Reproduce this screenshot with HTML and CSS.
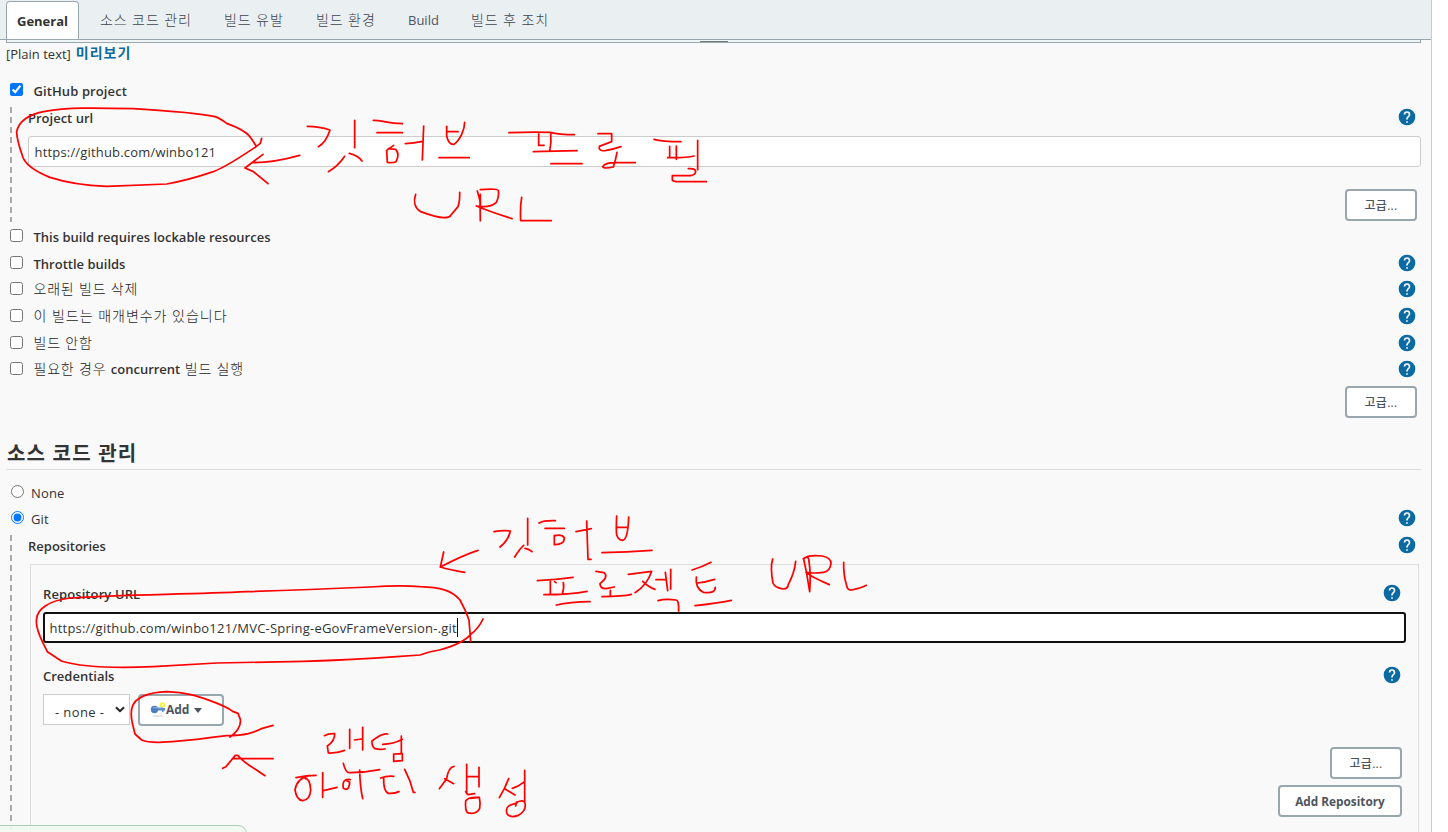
FILE: index.html
```html
<!DOCTYPE html>
<html lang="ko">
<head>
<meta charset="utf-8">
<title>General</title>
<link rel="stylesheet" href="styles.css">
</head>
<body>
<svg width="0" height="0" class="defs">
  <symbol id="help" viewBox="0 0 24 24">
    <path fill="#0b6aa2" d="M12 2a10 10 0 1 0 0 20a10 10 0 0 0 0-20zm1 17h-2v-2h2zm2.07-7.75l-.9.92C13.45 12.9 13 13.5 13 15h-2v-.5c0-1.1.45-2.1 1.17-2.83l1.24-1.26c.37-.36.59-.86.59-1.41a2 2 0 1 0-4 0H8a4 4 0 1 1 8 0c0 .88-.36 1.68-.93 2.25z"/>
  </symbol>
</svg>
<main class="page">
  <nav class="tabs">
    <a class="tab active">General</a>
    <a class="tab t-scm">소스 코드 관리</a>
    <a class="tab t-trigger">빌드 유발</a>
    <a class="tab t-env">빌드 환경</a>
    <a class="tab t-build">Build</a>
    <a class="tab t-post">빌드 후 조치</a>
  </nav>
  <div class="textarea-end"><span class="grip"></span></div>
  <div class="preview"><span class="plain">[Plain text]</span><a class="preview-link">미리보기</a></div>

  <div class="row github"><input type="checkbox" checked><span class="semi gh">GitHub project</span></div>
  <section class="nested project">
    <div class="field-head"><span class="semi">Project url</span><svg class="help"><use href="#help"/></svg></div>
    <div class="input"><span class="u1">https://github.com/winbo121</span></div>
    <div class="actions"><button class="btn adv">고급...</button></div>
  </section>

  <div class="row r1"><input type="checkbox"><span class="semi lock">This build requires lockable resources</span></div>
  <div class="row r2"><input type="checkbox"><span class="semi throttle">Throttle builds</span><svg class="help"><use href="#help"/></svg></div>
  <div class="row r3"><input type="checkbox"><span class="ko">오래된 빌드 삭제</span><svg class="help"><use href="#help"/></svg></div>
  <div class="row r4"><input type="checkbox"><span class="ko">이 빌드는 매개변수가 있습니다</span><svg class="help"><use href="#help"/></svg></div>
  <div class="row r5"><input type="checkbox"><span class="ko">빌드 안함</span><svg class="help"><use href="#help"/></svg></div>
  <div class="row r6"><input type="checkbox"><span class="ko">필요한 경우 <b>concurrent</b> 빌드 실행</span><svg class="help"><use href="#help"/></svg></div>
  <div class="actions general-actions"><button class="btn adv">고급...</button></div>

  <h2>소스 코드 관리</h2>
  <div class="row radio none"><input type="radio" name="scm"><span>None</span></div>
  <div class="row radio git"><input type="radio" name="scm" checked><span>Git</span><svg class="help"><use href="#help"/></svg></div>
  <section class="nested repos">
    <div class="field-head"><span class="semi">Repositories</span><svg class="help"><use href="#help"/></svg></div>
    <div class="card">
      <div class="field-head"><span class="semi repo-label">Repository URL</span><svg class="help"><use href="#help"/></svg></div>
      <div class="input focused"><span class="u2">https://github.com/winbo121/MVC-Spring-eGovFrameVersion-.git</span><i class="caret"></i></div>
      <div class="field-head cred"><span class="semi">Credentials</span><svg class="help"><use href="#help"/></svg></div>
      <div class="cred-row">
        <div class="select"><span>- none -</span><svg width="10" height="7" viewBox="0 0 10 7"><path d="M1 1.2L5 5.2L9 1.2" fill="none" stroke="#222" stroke-width="2"/></svg></div>
        <button class="btn add">
          <svg width="16" height="16" viewBox="0 0 16 16"><ellipse cx="8" cy="14" rx="6" ry="1" fill="#e3e3e3"/><circle cx="12.5" cy="3" r="2" fill="#fffbc0" stroke="#f7ef3a" stroke-width="1.5"/><path d="M6 6H15V8.5H13.5V10H12V8.5H6z" fill="#5b8bc5"/><circle cx="4.5" cy="7.5" r="3.7" fill="#4c7fbd"/><path d="M3 5.8H13" stroke="#8fb3dc"/></svg><span>Add</span><i class="arrow"></i>
        </button>
      </div>
      <div class="card-actions"><button class="btn adv">고급...</button><button class="btn repo-btn">Add Repository</button></div>
    </div>
  </section>
</main>
<div class="status"></div>

<!-- freehand red pen strokes over the form -->
<svg class="ink" viewBox="0 0 1448 832">
  <g transform="scale(.33333)">
    <path d="M785 415L781 430L768 440C730 465 680 500 640 515C590 532 540 545 500 552L320 559C240 556 190 545 150 532C100 512 80 495 70 475C58 440 50 420 50 395C55 370 75 345 135 334C200 322 280 323 400 326C500 332 600 340 645 350Q660 355 680 370Q735 390 750 410L768 437"/>
    <path d="M789 463L735 504L760 515L804 551M759 488Q820 488 899 466"/>
  </g>
  <g transform="translate(240 100) scale(.33333)">
    <path d="M202 79Q238 79 270 90Q258 128 235 140M344 61V143M314 169C300 190 280 207 265 215M328 160Q356 167 366 183"/>
    <path d="M400 61C430 61 440 71 487 71M411 98H487M461 136L440 151L442 187Q458 190 468 185Q480 162 467 148L445 146M496 131Q520 130 548 124M551 78L547 180"/>
    <path d="M620 79V108Q626 135 642 133C660 120 674 90 674 67M621 95H654M597 173H688"/>
    <path d="M527 283C520 303 523 324 542 335Q590 353 612 353Q629 353 633 345L654 320Q660 303 659 277"/>
  </g>
  <g transform="translate(360 0) scale(.33333)">
    <path d="M352 573L360 602L361 662M361 583V622M361 569Q415 565 415 572Q418 590 409 607Q390 625 349 618Q390 635 456 656M485 592Q480 620 482 662H574"/>
  </g>
  <g transform="translate(490 110) scale(.33333)">
    <path d="M57 68Q110 66 180 67Q208 74 253 74M146 68V106H162M182 68Q185 95 179 124M130 125L261 122M183 161H276"/>
    <path d="M324 71H365V95L328 109Q325 124 345 122Q370 118 393 110M381 127Q377 150 370 171Q340 177 338 170Q345 158 374 158H436"/>
    <path d="M492 88Q515 95 573 95M539 109V139M559 108V148M533 143Q590 144 612 138M623 91V179M595 176Q617 174 617 185Q615 195 602 197H547V210Q550 215 566 215H649"/>
  </g>
  <g transform="translate(420 500) scale(.33333)">
    <path d="M152 424L147 360L136 332L120 300C95 270 60 262 0 260Q-60 255 -150 261Q-350 270 -520 275C-700 284 -890 283 -1050 294C-1115 302 -1147 327 -1150 355Q-1155 380 -1132 427L-1118 455L-1076 483C-1020 500 -930 506 -800 500L-610 489L-350 484Q-200 480 -70 470L0 465L28 456L58 450Q130 430 152 403Q175 387 189 357"/>
    <path d="M71 156L61 201Q90 210 134 217M61 201Q130 165 174 151"/>
    <path d="M222 95Q250 90 271 93Q265 122 240 141M323 55V135M311 136Q300 145 284 171M315 145Q325 146 336 155"/>
    <path d="M357 69Q370 61 406 62M375 85H433M403 106V134Q433 135 433 113Q425 102 405 107M468 95L514 86M500 63L504 178H513M590 48Q588 90 590 105Q595 120 608 121Q624 118 626 51M591 82H624M546 158Q620 157 696 151"/>
    <path d="M352 242Q410 239 459 232M391 242V280M404 245L408 248M430 248Q433 262 427 281M372 284Q450 284 501 274M409 315Q450 306 510 305"/>
    <path d="M528 214L552 218Q567 230 540 251Q540 266 558 266L583 261M571 271V290M546 290Q610 289 634 283M625 223L695 214Q680 258 645 278M668 244Q687 262 705 268"/>
  </g>
  <g transform="translate(640 540) scale(.33333)">
    <path d="M48 119H75M76 97L83 152M92 88V147M54 182Q75 176 108 180Q117 180 116 213M156 90Q185 82 213 67M169 111Q165 145 190 157Q226 162 226 142M172 129Q198 126 224 118M165 197Q230 190 274 181"/>
    <path d="M398 57Q390 83 399 129Q404 143 430 147Q444 146 445 133Q463 100 467 64M490 57Q507 44 507 65Q513 100 509 155M491 57L500 100L509 155M490 56Q505 43 547 48Q573 53 573 70Q570 95 550 97Q520 101 498 97Q515 111 568 134M611 67Q610 105 620 137Q622 151 635 150Q665 144 679 136"/>
  </g>
  <g transform="translate(0 660) scale(.33333)">
    <path d="M690 231Q725 205 721 178L714 160L698 154Q680 140 630 122C590 107 560 98 500 95C440 97 407 115 398 137Q390 155 397 190L405 222L425 240Q440 247 475 247Q560 243 635 232L680 227Q720 227 745 221Q775 212 787 205L819 196"/>
    <path d="M668 325L678 320L706 286L713 286Q735 310 765 327L795 347M700 296H819"/>
  </g>
  <g transform="translate(280 710) scale(.33333)">
    <path d="M133 77Q145 70 164 71Q165 92 142 108L145 129Q170 130 194 121M209 58V115M223 90L245 87M248 52V120M323 72Q307 68 276 93Q275 110 285 116Q300 120 315 117M308 103Q340 103 367 88M364 78V128M341 132V154L367 152V131Z"/>
    <path d="M190 160Q197 190 210 188Q255 188 299 179M48 203Q80 196 108 196M88 197Q50 205 45 240Q50 270 68 272Q90 270 92 240Q90 205 75 205M128 188V262M130 242L171 232M211 209Q185 204 190 235Q207 246 209 217L197 210M239 180Q240 230 248 266M302 204Q320 197 341 199M311 202Q310 245 325 250Q340 252 357 245M374 178L389 211L400 247H405"/>
    <path d="M522 169Q505 172 500 206L478 236M494 206L521 221M560 163V251M597 172V230M560 200H597M557 245L564 254L584 251M595 262Q565 260 557 273Q555 300 562 308Q590 315 599 295Q602 280 598 262L570 265"/>
    <path d="M686 206L673 236L658 263M675 237L705 255M697 235Q715 230 734 215M734 181V277M707 288L709 277Q730 268 734 277Q742 300 715 316Q690 325 681 311Q672 285 710 280"/>
  </g>
</svg>
</body>
</html>
```
FILE: styles.css
```css
* { box-sizing: border-box; }
body {
  margin: 0;
  height: 832px;
  overflow: hidden;
  position: relative;
  background: #fff;
  color: #333;
  font: 14px/20px "Open Sans", "Noto Sans CJK KR", sans-serif;
  white-space: nowrap;
}
.defs { position: absolute; }
.page {
  width: 1432px;
  height: 832px;
  overflow: hidden;
  background: #f9f9f9;
  border-right: 1px solid #ccc;
}
.tabs {
  height: 40px;
  display: flex;
  align-items: flex-end;
  padding-left: 6px;
  background: #eaeff2;
  border-bottom: 1px solid #98a6ad;
}
.tab { height: 38px; line-height: 37px; color: #3d444d; font-size: 14px; font-weight: 300; letter-spacing: .9px; }
.tab.active {
  width: 73px;
  border: 1px solid #98a6ad;
  border-bottom: 0;
  border-radius: 4px 4px 0 0;
  background: #fff;
  color: #333;
  font-weight: 700;
  font-size: 13px;
  line-height: 38px;
  letter-spacing: 0;
  text-align: center;
}
.t-scm { margin-left: 21px; width: 124px; }
.t-trigger, .t-env { width: 92px; }
.tab.t-build { width: 63px; font-size: 13px; font-weight: 400; line-height: 39px; letter-spacing: 0; color: #4d545d; }

.textarea-end {
  height: 3px;
  margin: 0 10px 0 6px;
  padding-left: 693px;
  border: 1px solid #98a6ad;
  border-top: 0;
  background: #f0f5f8;
}
.grip { display: block; width: 28px; height: 2px; border-bottom: 1px solid #777; }
.preview { height: 36px; padding: 0 0 0 6px; display: flex; gap: 5px; }
.plain { font-size: 13px; line-height: 22px; }
.preview-link { color: #0b6aa2; font-weight: 700; letter-spacing: 1px; }

.row { display: flex; align-items: flex-start; padding: 0 14px 0 10px; height: 27px; }
.row input { width: 13px; height: 13px; margin: 4px 10.5px 0 0; flex: none; }
.row > span { margin-top: 2px; }
.semi { font-weight: 600; font-size: 13px; }
.gh { letter-spacing: .1px; }
.row > .ko { font-size: 14px; font-weight: 300; letter-spacing: .8px; margin-top: 1px; color: #1c1c1c; }
.r4 > .ko { letter-spacing: .98px; }
.ko b { font-size: 13px; font-weight: 600; letter-spacing: 0; color: #333; }
.help { width: 20px; height: 20px; margin: 1px 0 0 auto; flex: none; display: block; }
.github { height: 28px; }
.github input { margin-top: 4px; }

.nested {
  margin-left: 10px;
  padding-left: 18px;
  background: repeating-linear-gradient(#a9a9a9 0 6px, transparent 6px 10px) 0 0 / 2px 100% no-repeat;
}
.project { height: 115px; }
.field-head { display: flex; padding-right: 14px; height: 29px; }
.project .field-head { padding-top: 1px; }
.project .help { margin-top: -1px; }
.input {
  height: 31px;
  margin-right: 10px;
  padding-left: 5.5px;
  border: 1px solid #ccc;
  border-radius: 3px;
  background: #fff;
  display: flex;
  align-items: center;
  font-size: 13px;
}
.u1 { letter-spacing: .18px; }
.u2 { letter-spacing: .22px; }
.actions { display: flex; justify-content: flex-end; padding: 22px 14px 0 0; }
.btn {
  height: 32px;
  padding: 0;
  border: 2px solid #98a6ad;
  border-radius: 4px;
  background: #fff;
  color: #4d545d;
  font: 700 12px/26px "Open Sans", "Noto Sans CJK KR", sans-serif;
}
.adv { width: 72px; font-weight: 500; padding-top: 2px; line-height: 24px; letter-spacing: .3px; }

.r1, .r2, .r3, .r4, .r5, .r6 { padding-top: 4px; }
.r1 { height: 27px; margin-top: -1px; }
.r2 { height: 26px; }
.r3, .r4 { height: 27px; }
.r5 { height: 26px; }
.r6 { height: 27px; }
.general-actions { padding-top: 5px; }
h2 {
  height: 52px;
  margin: 0 10px 0 6px;
  padding: 22px 0 0 1px;
  border-bottom: 1px solid #ddd;
  font: 700 20px/28px "Open Sans", "Noto Sans CJK KR", sans-serif;
  letter-spacing: 1.2px;
}
.radio { height: 26px; font-size: 13px; letter-spacing: .15px; }
.radio input { margin: 4px 7px 0 1px; }
.none { margin-top: 11px; }
.radio > span { margin-top: 2px; }
.git { height: 28px; }
.repos { height: 295px; }
.repos > .field-head { padding-top: 1px; }
.repos > .field-head .help { margin-top: -1px; }
.card {
  height: 300px;
  margin: 0 12px 0 2px;
  border: 1px solid #ddd;
  padding: 19px 12px 0;
}
.card .field-head { padding-right: 4px; height: 28px; }
.card .field-head .help { margin-top: -1px; }
.card .input { margin-right: 0; }
.repo-label { letter-spacing: .1px; }
.card .input.focused { border: 2px solid #101010; padding-left: 4.5px; }
.focused .u2 { padding-top: 1px; }
.caret { width: 1px; height: 19px; background: #111; }
.cred { margin-top: 23px; }
.cred-row { display: flex; gap: 8px; }
.select {
  width: 87px;
  height: 31px;
  border: 1px solid #ccc;
  background: #fff;
  display: flex;
  align-items: center;
  justify-content: space-between;
  padding: 0 4px 0 11px;
  font-size: 13px;
  letter-spacing: .4px;
}
.select span { padding-top: 5px; }
.add { width: 86px; display: flex; align-items: center; padding-left: 10px; }
.arrow { border: 4px solid transparent; border-top: 5px solid #4d545d; margin: 4px 0 0 5px; }
.card-actions { display: flex; flex-direction: column; align-items: flex-end; gap: 6px; padding: 21px 4px 0 0; }
.repo-btn { width: 124px; font-size: 11.8px; }
.status {
  position: absolute;
  left: -1px;
  top: 825px;
  width: 248px;
  height: 20px;
  border: 1px solid #a9cdb8;
  border-radius: 0 9px 0 0;
  background: rgba(241, 248, 240, .9);
}
.ink {
  position: absolute;
  left: 0;
  top: 0;
  width: 1448px;
  height: 832px;
  pointer-events: none;
}
.ink path { fill: none; stroke: #f00; stroke-width: 5.2; stroke-linecap: round; stroke-linejoin: round; }
```
